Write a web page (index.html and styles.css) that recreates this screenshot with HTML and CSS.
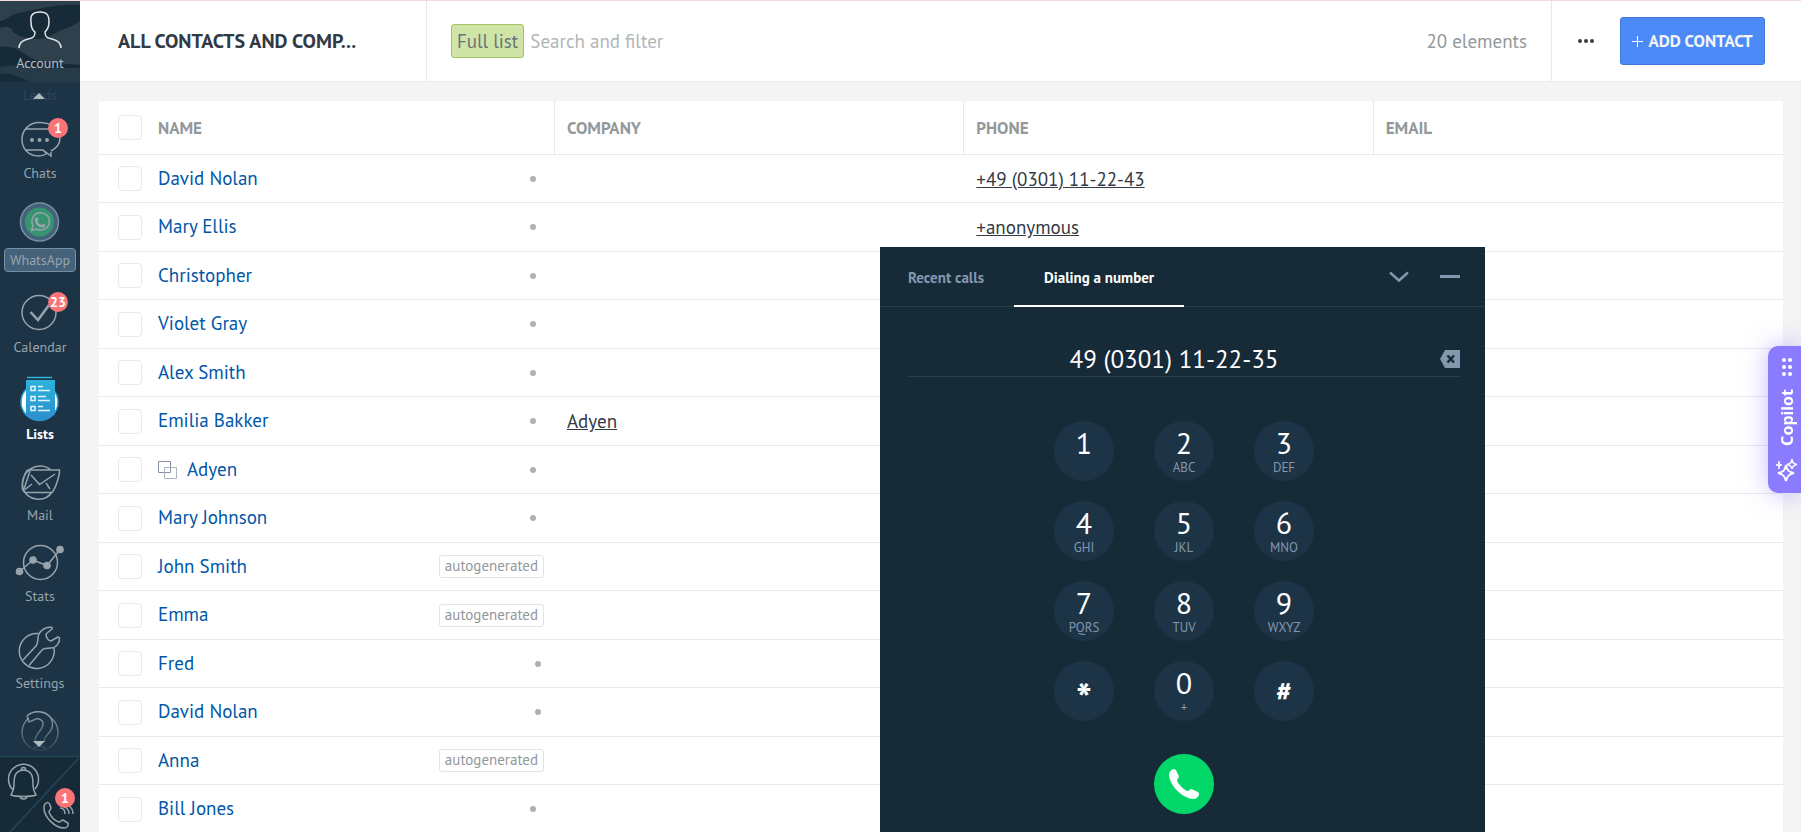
FILE: index.html
```html
<!DOCTYPE html>
<html lang="en">
<head>
    <meta charset="UTF-8">
    <meta name="viewport" content="width=device-width, initial-scale=1.0">
    <title>All contacts and companies</title>
    <link rel="stylesheet" href="styles.css">
</head>
<body>
<aside class="sidebar">
    <a href="#" class="account">
        <svg class="account-bg" viewBox="0 0 80 81" preserveAspectRatio="none" aria-hidden="true">
            <rect width="80" height="81" fill="#172a38"/>
            <path d="M0 0H80V4C60 2 40 8 18 12C10 14 5 20 0 20Z" fill="#2d404c"/>
            <path d="M0 27C8 25 12 26 13 31C20 38 42 41 52 34C62 27 70 28 80 20V64C50 61 40 63 28 55C18 48 10 44 0 46Z" fill="#2d404c"/>
            <path d="M0 66C26 62 40 68 80 67V81H30C20 76 8 71 0 73Z" fill="#263a47"/>
        </svg>
        <svg class="account-icon" viewBox="0 0 44 40" aria-hidden="true">
            <path d="M1 38C1 32 6 30 10 29C15 28 17 27 17 22C14 20 13 16 13 12C12 5 15 2 22 2S31 5 31 12C31 16 29 20 27 22C27 27 29 28 34 29C38 30 43 32 43 38"/>
        </svg>
        <span>Account</span>
    </a>
    <nav class="nav">
        <a href="#" class="nav-faded">Leads</a>
        <span class="arrow arrow-up"></span>
        <a href="#" class="nav-item">
            <svg viewBox="0 0 80 44" aria-hidden="true">
                <path d="M51 36V40L43 34M51 35C56 32 60 29 60 22C59 11 50 6.500 39 6.500C29 6.500 22 14 22 23.500C22 33 29 40 38 40C42 40 45 39 48 37M26 13H51M26 34H43L46 37"/>
                <g class="fill"><circle cx="32" cy="24" r="2"/><circle cx="39.500" cy="24" r="2"/><circle cx="47" cy="24" r="2"/></g>
            </svg>
            <span class="badge">1</span>
            <span>Chats</span>
        </a>
        <a href="#" class="nav-item">
            <svg viewBox="0 -2 80 44" aria-hidden="true">
                <circle cx="39.500" cy="19" r="19" fill="#44627a" stroke="#7590a2"/>
                <circle cx="39.500" cy="19" r="14.500" fill="#38936f" stroke="none"/>
                <path d="M31.500 27.500L33 22.500A8.700 8.700 0 1 1 36.500 26Z"/>
                <path class="fill" d="M36 14.500C37 14 37.600 14.300 38 15.300L38.600 17L37.600 18.400C38.600 20.300 40 21.500 41.700 22L43 20.800L45.500 22C45.300 24 44 25 42 24.700C38 24 35 20.500 34.700 17.500C34.700 16 35 15 36 14.500Z"/>
            </svg>
            <span class="nav-tag">WhatsApp</span>
        </a>
        <a href="#" class="nav-item">
            <svg viewBox="0 0 80 44" aria-hidden="true">
                <circle cx="39" cy="22.500" r="17"/>
                <path d="M30.500 22L38 30L49 15" stroke-width="2.500"/>
            </svg>
            <span class="badge">23</span>
            <span>Calendar</span>
        </a>
        <a href="#" class="nav-item active">
            <svg viewBox="0 -2 80 44" aria-hidden="true">
                <defs>
                    <linearGradient id="listFill" x1="0" y1="0" x2="0" y2="1">
                        <stop offset="0" stop-color="#2cb2dc"/>
                        <stop offset="1" stop-color="#2b8fcd"/>
                    </linearGradient>
                </defs>
                <ellipse cx="39.500" cy="23" rx="18.500" ry="18.500" fill="#fff" stroke="#2ba3d6"/>
                <path d="M26 1V35C29 39 34 42 39.500 42S51 39 55 35V1Z" fill="url(#listFill)" stroke="none"/>
                <path d="M27 -1.500H52" stroke="#2cb2dc"/>
                <path class="white" d="M31 7.500H35V11.500H31ZM31 17.500H35V21.500H31ZM31 27.500H35V31.500H31ZM38 7.500H43M38 11.500H50M38 17.500H46M38 21.500H50M38 27.500H43M38 31.500H50"/>
            </svg>
            <span>Lists</span>
        </a>
        <a href="#" class="nav-item compact">
            <svg viewBox="0 0 80 44" aria-hidden="true">
                <path d="M51 12A17.500 17.500 0 0 0 23 30C27 43 45 45 52 34M28 12H59.500C60 16 56 30 52 34.500H25C22 33 21.500 28 23 23C24 18 26 13 28 12ZM31 17L39.500 26.500L55 16M32 26L25 31.500M46 25L50 31"/>
                <path d="M30 13L24 31"/>
            </svg>
            <span>Mail</span>
        </a>
        <a href="#" class="nav-item compact">
            <svg viewBox="0 0 80 44" aria-hidden="true">
                <circle cx="40.500" cy="23.500" r="17"/>
                <path d="M19.500 32.500L33 21L47 26.500L60 10.500"/>
                <g class="fill"><circle cx="19.500" cy="32.500" r="3.800"/><circle cx="33" cy="21" r="3.800"/><circle cx="47" cy="26.500" r="3.800"/><circle cx="60" cy="10.500" r="3.800"/></g>
            </svg>
            <span>Stats</span>
        </a>
        <a href="#" class="nav-item">
            <svg viewBox="0 0 80 44" aria-hidden="true">
                <path d="M38 7.500A17.500 17.500 0 1 0 54 22"/>
                <path d="M23 34L36 20C38 17 38 15 38 11C39 5 46 0 52 1.500V3L46 8C46 11 48 15 51 15L58 11L59.500 12C60 17 56 22 51 22C47 22 44 22 42 24L29 39.500"/>
            </svg>
            <span>Settings</span>
        </a>
        <a href="#" class="nav-help" aria-label="Help">
            <svg viewBox="0 0 80 44" aria-hidden="true">
                <defs>
                    <linearGradient id="helpFade" gradientUnits="userSpaceOnUse" x1="0" y1="0" x2="0" y2="42">
                        <stop offset="0" stop-color="#98a4ac"/>
                        <stop offset="1" stop-color="#98a4ac" stop-opacity="0.1"/>
                    </linearGradient>
                </defs>
                <g class="fade">
                    <path d="M29 8A18 18 0 1 0 51 8"/>
                    <path d="M27 6C34 -1 46 1 51 8C54 14 52 20 48 24C44 28 44 30 44 32M35 31C35 24 43 20 43 14C43 8 35 8 34 10L29 12L27 6"/>
                    <path d="M34 39C36 35 43 35 45 39"/>
                </g>
            </svg>
        </a>
        <span class="arrow arrow-down"></span>
    </nav>
    <div class="side-footer">
        <svg class="side-split" viewBox="0 0 80 76" preserveAspectRatio="none" aria-hidden="true">
            <path d="M79 1L10 76"/>
        </svg>
        <button type="button" class="icon-button" aria-label="Notifications">
            <svg width="32" height="40" viewBox="0 0 32 40" aria-hidden="true">
                <path d="M5 29A15 15 0 1 1 27 28M3 34C4 31 6 30 6 24C6 15 7 10 15.500 9C24 10 25 15 25 24C25 30 27 31 28 34C22 36 9 36 3 34ZM12 35C12 39 19 39 19 35M13.500 9V8C13.500 6 17.500 6 17.500 8V9"/>
            </svg>
        </button>
        <button type="button" class="icon-button calls-button" aria-label="Calls">
            <svg width="34" height="28" viewBox="0 0 34 28" aria-hidden="true">
                <path d="M3 3C5 1 7 1 8 4L9 7C9 9 7 9 7 11C9 16 13 20 17 21C19 21 19 19 21 19L26 22C27 25 25 27 22 27C13 27 2 16 2 7C2 5 2 4 3 3ZM18 7C21 7 23 9 23 13M22 6C26 7 27 10 27 13M27 5C30 7 31 9 31 13"/>
            </svg>
            <span class="badge">1</span>
        </button>
    </div>
</aside>

<div class="page">
    <header class="topbar">
        <h1 class="title">ALL CONTACTS AND COMP...</h1>
        <div class="search">
            <button type="button" class="filter-tag">Full list</button>
            <input type="text" class="search-input" placeholder="Search and filter" aria-label="Search and filter">
            <span class="count">20 elements</span>
        </div>
        <div class="actions">
            <button type="button" class="more" aria-label="More">
                <svg width="18" height="6" viewBox="0 0 18 6" aria-hidden="true"><circle cx="3" cy="3" r="2"/><circle cx="9" cy="3" r="2"/><circle cx="15" cy="3" r="2"/></svg>
            </button>
            <button type="button" class="add-contact">
                <svg width="11" height="11" viewBox="0 0 11 11" aria-hidden="true"><path d="M5.500 0V11M0 5.500H11"/></svg>
                ADD CONTACT
            </button>
        </div>
    </header>

    <main class="content">
        <table class="contacts">
            <thead>
                <tr>
                    <th scope="col"><div class="name-cell"><input type="checkbox" class="check" aria-label="Select all"><span>NAME</span></div></th>
                    <th scope="col">COMPANY</th>
                    <th scope="col">PHONE</th>
                    <th scope="col">EMAIL</th>
                </tr>
            </thead>
            <tbody>
                <tr>
                    <td><div class="name-cell"><input type="checkbox" class="check" aria-label="Select David Nolan"><a href="#">David Nolan</a><span class="dot"></span></div></td>
                    <td></td>
                    <td><a href="#" class="value">+49 (0301) 11-22-43</a></td>
                    <td></td>
                </tr>
                <tr>
                    <td><div class="name-cell"><input type="checkbox" class="check" aria-label="Select Mary Ellis"><a href="#">Mary Ellis</a><span class="dot"></span></div></td>
                    <td></td>
                    <td><a href="#" class="value">+anonymous</a></td>
                    <td></td>
                </tr>
                <tr>
                    <td><div class="name-cell"><input type="checkbox" class="check" aria-label="Select Christopher"><a href="#">Christopher</a><span class="dot"></span></div></td>
                    <td></td><td></td><td></td>
                </tr>
                <tr>
                    <td><div class="name-cell"><input type="checkbox" class="check" aria-label="Select Violet Gray"><a href="#">Violet Gray</a><span class="dot"></span></div></td>
                    <td></td><td></td><td></td>
                </tr>
                <tr>
                    <td><div class="name-cell"><input type="checkbox" class="check" aria-label="Select Alex Smith"><a href="#">Alex Smith</a><span class="dot"></span></div></td>
                    <td></td><td></td><td></td>
                </tr>
                <tr>
                    <td><div class="name-cell"><input type="checkbox" class="check" aria-label="Select Emilia Bakker"><a href="#">Emilia Bakker</a><span class="dot"></span></div></td>
                    <td><a href="#" class="value">Adyen</a></td>
                    <td></td><td></td>
                </tr>
                <tr>
                    <td>
                        <div class="name-cell">
                            <input type="checkbox" class="check" aria-label="Select Adyen">
                            <svg class="company-icon" width="19" height="18" viewBox="0 0 19 18" aria-hidden="true"><path d="M0.500 0.500H12.500V11.500H0.500Z" stroke="#8792a9"/><path d="M6.500 6.500H18.500V17.500H6.500Z" stroke="#aab2c4"/></svg>
                            <a href="#">Adyen</a><span class="dot"></span>
                        </div>
                    </td>
                    <td></td><td></td><td></td>
                </tr>
                <tr>
                    <td><div class="name-cell"><input type="checkbox" class="check" aria-label="Select Mary Johnson"><a href="#">Mary Johnson</a><span class="dot"></span></div></td>
                    <td></td><td></td><td></td>
                </tr>
                <tr>
                    <td><div class="name-cell"><input type="checkbox" class="check" aria-label="Select John Smith"><a href="#">John Smith</a><span class="tag">autogenerated</span></div></td>
                    <td></td><td></td><td></td>
                </tr>
                <tr>
                    <td><div class="name-cell"><input type="checkbox" class="check" aria-label="Select Emma"><a href="#">Emma</a><span class="tag">autogenerated</span></div></td>
                    <td></td><td></td><td></td>
                </tr>
                <tr>
                    <td><div class="name-cell"><input type="checkbox" class="check" aria-label="Select Fred"><a href="#">Fred</a><span class="dot dot-end"></span></div></td>
                    <td></td><td></td><td></td>
                </tr>
                <tr>
                    <td><div class="name-cell"><input type="checkbox" class="check" aria-label="Select David Nolan"><a href="#">David Nolan</a><span class="dot dot-end"></span></div></td>
                    <td></td><td></td><td></td>
                </tr>
                <tr>
                    <td><div class="name-cell"><input type="checkbox" class="check" aria-label="Select Anna"><a href="#">Anna</a><span class="tag">autogenerated</span></div></td>
                    <td></td><td></td><td></td>
                </tr>
                <tr>
                    <td><div class="name-cell"><input type="checkbox" class="check" aria-label="Select Bill Jones"><a href="#">Bill Jones</a><span class="dot"></span></div></td>
                    <td></td><td></td><td></td>
                </tr>
            </tbody>
        </table>
    </main>
</div>

<section class="dialer" aria-label="Phone">
    <div class="dialer-head">
        <button type="button" class="tab">Recent calls</button>
        <button type="button" class="tab tab-active">Dialing a number</button>
        <div class="window-buttons">
            <button type="button" class="icon-button" aria-label="Collapse">
                <svg width="20" height="12" viewBox="0 0 20 12" aria-hidden="true"><path d="M1 1.500L10 9.500L19 1.500" stroke-width="2.500"/></svg>
            </button>
            <button type="button" class="icon-button" aria-label="Minimize">
                <svg width="20" height="12" viewBox="0 0 20 12" aria-hidden="true"><path d="M0 5.500H20" stroke-width="3"/></svg>
            </button>
        </div>
    </div>
    <div class="dialer-body">
        <div class="number-row">
            <input type="tel" class="number" value="49 (0301) 11-22-35" aria-label="Phone number">
            <button type="button" class="icon-button" aria-label="Delete digit">
                <svg width="20" height="18" viewBox="0 0 20 18" aria-hidden="true"><path d="M5 0H20V18H5L0 9Z" fill="#8497ad" stroke="none"/><path d="M7.500 5.500L14 12.500M14 5.500L7.500 12.500" stroke="#162a38" stroke-width="2.500"/></svg>
            </button>
        </div>
        <div class="keypad">
            <button type="button" class="key">1<small></small></button>
            <button type="button" class="key">2<small>ABC</small></button>
            <button type="button" class="key">3<small>DEF</small></button>
            <button type="button" class="key">4<small>GHI</small></button>
            <button type="button" class="key">5<small>JKL</small></button>
            <button type="button" class="key">6<small>MNO</small></button>
            <button type="button" class="key">7<small>PQRS</small></button>
            <button type="button" class="key">8<small>TUV</small></button>
            <button type="button" class="key">9<small>WXYZ</small></button>
            <button type="button" class="key key-star">*</button>
            <button type="button" class="key">0<small>+</small></button>
            <button type="button" class="key key-hash">#</button>
        </div>
        <button type="button" class="call" aria-label="Call">
            <svg width="30" height="30" viewBox="0 0 30 30" aria-hidden="true"><path d="M0 5C0 3 3 0 5 0C6 0 7 1 7.500 2L10 7.500C10 9 8 10 8 11.500C9 15 15 21 18.500 22C20 22 21 20 22.500 20L29 23C30 24 30.500 25 30 26C29 28 27 30 25 30C12 29.500 0 15 0 5Z"/></svg>
        </button>
    </div>
</section>

<button type="button" class="copilot">
    <svg width="20" height="22" viewBox="0 0 20 22" aria-hidden="true">
        <path d="M9 6C10 12 12 13 17 14C12 15 10 17 9 22C8 17 6 15 1 14C6 13 8 12 9 6Z" fill="none" stroke="#fff" stroke-width="2"/>
        <path d="M2 2C2 5 3 6 5 6C3 6 2 7 2 10C2 7 1 6 -1 6C1 6 2 5 2 2Z" fill="#fff" stroke="#fff"/>
        <path d="M15 0C15.500 4 16.500 5 20 5.500C16.500 6 15.500 7 15 10C14.500 7 13.500 6 10 5.500C13.500 5 14.500 4 15 0Z" fill="none" stroke="#fff" stroke-width="1.500"/>
    </svg>
    <span>Copilot</span>
    <svg width="10" height="18" viewBox="0 0 10 18" fill="#fff" aria-hidden="true">
        <circle cx="2" cy="2" r="2"/><circle cx="8" cy="2" r="2"/><circle cx="2" cy="9" r="2"/><circle cx="8" cy="9" r="2"/><circle cx="2" cy="16" r="2"/><circle cx="8" cy="16" r="2"/>
    </svg>
</button>
</body>
</html>
```
FILE: styles.css
```css
* {
    box-sizing: border-box;
}

body {
    font-family: "PT Sans", Lato, sans-serif;
    font-size: 19px;
    margin: 0;
    height: 100vh;
    display: flex;
    overflow: hidden;
    background-color: #f4f4f4;
    border-top: 1px solid #f3dadd;
    color: #313a45;
}

button, input {
    font-family: inherit;
    margin: 0;
    padding: 0;
}

button {
    border: none;
    background: none;
    cursor: pointer;
}

a {
    text-decoration: none;
}

/* Sidebar */
.sidebar {
    width: 80px;
    flex-shrink: 0;
    display: flex;
    flex-direction: column;
    background-color: #1d3447;
    font-size: 14px;
    line-height: 20px;
}

.sidebar svg {
    fill: none;
    stroke: #98a4ac;
    stroke-width: 1.5px;
    overflow: visible;
}

.sidebar svg .fill {
    fill: #98a4ac;
    stroke: none;
}

.sidebar svg .white {
    stroke: #e6f5fb;
}

.sidebar svg .fade {
    stroke: url(#helpFade);
}

.account {
    position: relative;
    height: 81px;
    display: flex;
    flex-direction: column;
    align-items: center;
    justify-content: flex-end;
    gap: 3px;
    padding-bottom: 9px;
    color: #b5bec4;
}

.account-bg {
    position: absolute;
    inset: 0;
    width: 100%;
    height: 100%;
}

.account-bg path, .account-bg rect {
    stroke: none;
}

.account .account-icon {
    position: relative;
    width: 44px;
    height: 40px;
    stroke: #e3e7e9;
}

.account span {
    position: relative;
}

.nav {
    position: relative;
    flex: 1;
    min-height: 0;
    overflow: hidden;
}

.nav a {
    position: relative;
    display: flex;
    flex-direction: column;
    align-items: center;
    color: #98a4ac;
}

.nav .nav-faded {
    height: 17px;
    justify-content: center;
    padding-top: 8px;
    color: #2f4659;
}

.arrow {
    position: absolute;
    left: 33px;
    border: 6px solid transparent;
}

.arrow-up {
    top: 5px;
    border-bottom-color: #b1babf;
}

.arrow-down {
    bottom: 3px;
    border-top-color: #b1babf;
}

.nav .nav-item {
    height: 87px;
    justify-content: flex-end;
    gap: 3px;
    padding-bottom: 3px;
}

.nav .compact {
    height: 81px;
}

.nav-item svg {
    width: 80px;
    height: 44px;
    flex-shrink: 0;
}

.nav-item .nav-tag {
    width: 72px;
    height: 24px;
    margin-bottom: -2px;
    text-align: center;
    line-height: 22px;
    border: 1px solid #7590a2;
    border-radius: 4px;
    background-color: #44627a;
}

.nav .active {
    color: #fff;
    font-weight: bold;
}

.nav-help {
    margin-top: 14px;
}

.badge {
    position: absolute;
    top: 19px;
    right: 12px;
    min-width: 20px;
    height: 20px;
    border-radius: 10px;
    background-color: #fb7478;
    color: #fff;
    font-size: 14px;
    font-weight: bold;
    line-height: 20px;
    text-align: center;
}

.side-footer {
    position: relative;
    height: 76px;
    flex-shrink: 0;
    display: flex;
    justify-content: space-between;
    padding: 4px 4px 0 8px;
    background-color: #162a38;
    border-top: 1px solid #23475c;
}

.sidebar .side-split {
    position: absolute;
    inset: 0;
    width: 100%;
    height: 100%;
    stroke: #23475c;
}

.icon-button {
    position: relative;
    display: flex;
    align-items: center;
}

.side-footer .icon-button {
    align-items: flex-start;
    align-self: flex-start;
}

.side-footer .calls-button {
    align-self: flex-end;
    padding-bottom: 3px;
    margin-left: -10px;
}

.calls-button .badge {
    top: -13px;
    right: 1px;
}

/* Top bar */
.page {
    flex: 1;
    min-width: 0;
    display: flex;
    flex-direction: column;
}

.topbar {
    height: 81px;
    flex-shrink: 0;
    display: flex;
    background-color: #fff;
    border-bottom: 1px solid #e8e8e9;
}

.title {
    width: 347px;
    margin: 0;
    padding-left: 38px;
    font-size: 20px;
    line-height: 80px;
    white-space: nowrap;
    border-right: 1px solid #e8e8e9;
}

.search {
    flex: 1;
    display: flex;
    align-items: center;
    gap: 6px;
    padding: 0 24px;
}

.filter-tag {
    height: 34px;
    padding: 0 5px;
    border: 1px solid #a2c563;
    border-radius: 3px;
    background-color: #d0e4a8;
    color: #6b7276;
    font-size: 19px;
    white-space: nowrap;
}

.search-input {
    flex: 1;
    min-width: 0;
    border: none;
    outline: none;
    font-size: 19px;
    color: #313a45;
}

.search-input::placeholder {
    color: #b2b5b7;
}

.count {
    color: #92989b;
    white-space: nowrap;
}

.actions {
    display: flex;
    align-items: center;
    gap: 24px;
    padding: 0 36px 0 24px;
    border-left: 1px solid #e8e8e9;
}

.more svg {
    display: block;
    fill: #363b44;
}

.more {
    padding: 8px 1px;
}

.add-contact {
    width: 145px;
    height: 48px;
    display: flex;
    align-items: center;
    justify-content: center;
    gap: 5px;
    border: 1px solid #3f78d8;
    border-radius: 3px;
    background-color: #4c8bf7;
    color: #f5f5f5;
    font-size: 17px;
    font-weight: bold;
    white-space: nowrap;
}

.add-contact svg {
    flex-shrink: 0;
    stroke: #fff;
}

/* Contacts table */
.content {
    flex: 1;
    min-height: 0;
    overflow: hidden;
    padding: 19px 18px 0 19px;
}

.contacts {
    width: 100%;
    table-layout: fixed;
    border-collapse: separate;
    border-spacing: 0;
    background-color: #fff;
}

.contacts th, .contacts td {
    padding: 0 12px;
    border-bottom: 1px solid #e8e8e9;
    text-align: left;
    white-space: nowrap;
}

.contacts th {
    height: 54px;
    border-right: 1px solid #e8e8e9;
    color: #92989b;
    font-size: 17px;
}

.contacts th:last-child {
    border-right: none;
}

.contacts th:first-child {
    width: 456px;
}

.contacts th:first-child, .contacts td:first-child {
    padding: 0 11px 0 19px;
}

.contacts td {
    height: 48px;
}

.contacts tr:nth-child(even) td {
    height: 49px;
}

.name-cell {
    display: flex;
    align-items: center;
}

.name-cell a {
    padding-bottom: 2px;
    color: #0057a8;
}

.check {
    appearance: none;
    width: 24px;
    height: 25px;
    margin-right: 16px;
    flex-shrink: 0;
    border: 1px solid #e8e8e9;
    border-radius: 4px;
    background-color: #fff;
}

.company-icon {
    margin-right: 10px;
    fill: none;
}

.dot {
    width: 6px;
    height: 6px;
    margin-left: auto;
    margin-right: 8px;
    border-radius: 50%;
    background-color: #b0b0b0;
}

.dot-end {
    margin-right: 3px;
}

.tag {
    height: 23px;
    margin-left: auto;
    padding: 0 5px;
    border: 1px solid #e2e3e4;
    border-radius: 3px;
    color: #92989b;
    font-size: 15px;
    line-height: 20px;
}

.value {
    color: #313a45;
    text-decoration: underline;
}

/* Dialer */
.dialer {
    position: fixed;
    right: 316px;
    bottom: 0;
    width: 605px;
    background-color: #162a38;
}

.dialer svg {
    display: block;
    fill: none;
    stroke: #8497ad;
}

.dialer-head {
    display: flex;
    height: 60px;
    padding-right: 25px;
    border-bottom: 1px solid #2b3e4c;
}

.tab {
    height: 60px;
    padding: 0 30px 0 28px;
    color: #8497ad;
    font-size: 15px;
    font-weight: bold;
    white-space: nowrap;
}

.tab-active {
    width: 170px;
    padding: 0;
    color: #fff;
    border-bottom: 2px solid #fff;
    border-top: 2px solid transparent;
}

.window-buttons {
    display: flex;
    gap: 31px;
    margin-left: auto;
}

.dialer-body {
    display: flex;
    flex-direction: column;
    align-items: center;
    padding: 34px 25px 18px 28px;
}

.number-row {
    align-self: stretch;
    display: flex;
    height: 36px;
    border-bottom: 1px solid #2b3e4c;
}

.number {
    flex: 1;
    min-width: 0;
    border: none;
    outline: none;
    background: none;
    color: #fff;
    font-size: 25px;
    text-align: center;
}

.keypad {
    display: grid;
    grid-template-columns: repeat(3, 60px);
    gap: 20px 40px;
    margin: 44px 0 33px;
}

.key {
    height: 60px;
    display: flex;
    flex-direction: column;
    align-items: center;
    justify-content: center;
    border-radius: 50%;
    background-color: #1d3447;
    color: #fff;
    font-size: 30px;
    line-height: 34px;
}

.key small {
    height: 16px;
    color: #8497ad;
    font-size: 13px;
    line-height: 16px;
}

.key-star {
    padding-top: 16px;
    font-size: 42px;
    font-weight: bold;
}

.key-hash {
    font-size: 27px;
    font-weight: bold;
}

.call {
    width: 60px;
    height: 60px;
    display: flex;
    align-items: center;
    justify-content: center;
    border-radius: 50%;
    background-color: #02d869;
}

.call svg {
    fill: #fff;
    stroke: none;
}

/* Copilot handle */
.copilot {
    position: fixed;
    right: 0;
    top: 346px;
    width: 33px;
    height: 147px;
    display: flex;
    flex-direction: column-reverse;
    align-items: center;
    justify-content: space-between;
    padding: 12px 0 12px 4px;
    border-radius: 10px 0 0 10px;
    background-color: #8b7cff;
    box-shadow: 0 0 24px rgba(139, 124, 255, 0.5);
    color: #fff;
    font-family: "Noto Sans", sans-serif;
    font-size: 16px;
    font-weight: bold;
}

.copilot svg {
    overflow: visible;
}

/* reads from bottom to top */
.copilot span {
    writing-mode: vertical-rl;
    transform: rotate(180deg);
}
```
